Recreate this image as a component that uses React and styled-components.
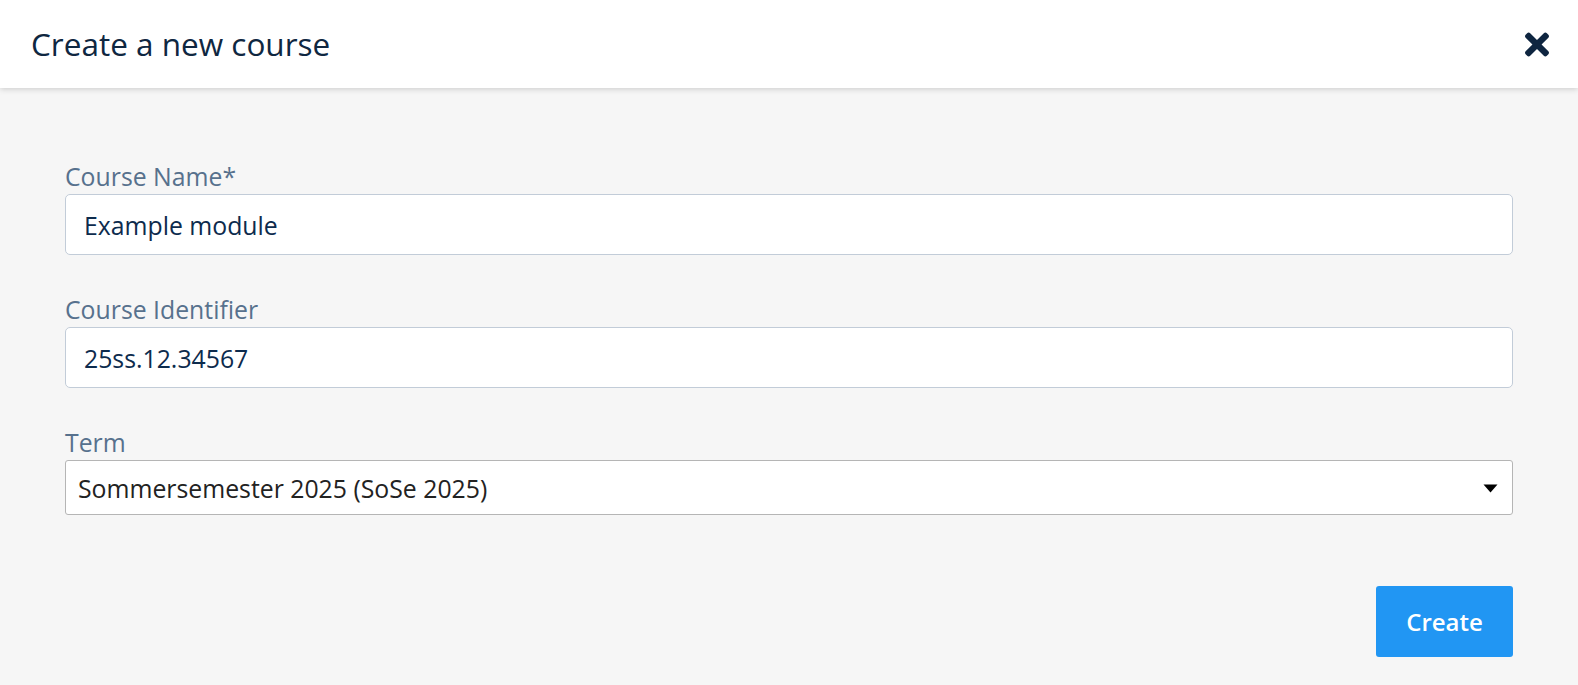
import React from "react";
import styled, { createGlobalStyle } from "styled-components";

const Global = createGlobalStyle`
  html, body { margin: 0; padding: 0; background: #f6f6f6; }
  body { font-family: "Open Sans", "Liberation Sans", sans-serif; }
  * { box-sizing: border-box; }
`;

const Page = styled.div`
  min-height: 685px;
  background: #f6f6f6;
  display: flex;
  flex-direction: column;
`;

const Header = styled.header`
  height: 88px;
  background: #ffffff;
  display: flex;
  align-items: center;
  justify-content: space-between;
  padding: 0 29px 0 31px;
  box-shadow: 0 1px 6px rgba(0, 0, 0, 0.18);
  position: relative;
  z-index: 1;
`;

const Title = styled.h1`
  margin: 0;
  font-size: 31.5px;
  font-weight: 400;
  color: #0f2741;
  line-height: 1.2;
`;

const CloseButton = styled.button`
  border: 0;
  background: none;
  padding: 0;
  display: flex;
  align-items: center;
  cursor: pointer;
  color: #0e2540;
`;

const Body = styled.main`
  padding: 71px 65px 0 65px;
  display: flex;
  flex-direction: column;
`;

const Field = styled.div`
  display: flex;
  flex-direction: column;
  margin-bottom: ${(p) => p.$mb}px;
`;

const Label = styled.label`
  font-size: 24.8px;
  line-height: 34px;
  color: #57718d;
  margin-bottom: 1px;
`;

const TextInput = styled.input`
  height: 61px;
  width: 100%;
  border: 1px solid #c2ccd8;
  border-radius: 5px;
  background: #ffffff;
  padding: 0 18px;
  font-family: "Open Sans", "Liberation Sans", sans-serif;
  font-size: 24.8px;
  color: #0d2b4d;
  outline: none;
`;

const SelectWrap = styled.div`
  position: relative;
  height: 55px;
`;

const Select = styled.select`
  appearance: none;
  -webkit-appearance: none;
  width: 100%;
  height: 55px;
  border: 1px solid #b5b5b5;
  border-radius: 3px;
  background: #ffffff;
  padding: 0 40px 0 12px;
  font-family: "Open Sans", "Liberation Sans", sans-serif;
  font-size: 24.8px;
  color: #222222;
  outline: none;
`;

const Caret = styled.svg`
  position: absolute;
  right: 15px;
  top: 24px;
  pointer-events: none;
`;

const Actions = styled.div`
  display: flex;
  justify-content: flex-end;
`;

const PrimaryButton = styled.button`
  width: 137px;
  height: 71px;
  border: 0;
  border-radius: 3px;
  background: #2196f3;
  color: #ffffff;
  font-family: "Open Sans", "Liberation Sans", sans-serif;
  font-size: 24px;
  font-weight: 600;
  cursor: pointer;
`;

export default function App() {
  return (
    <Page>
      <Global />
      <Header>
        <Title>Create a new course</Title>
        <CloseButton aria-label="Close">
          <svg width="24" height="35" viewBox="0 0 352 512" fill="currentColor">
            <path d="M242.72 256l100.07-100.07c12.28-12.28 12.28-32.19 0-44.48l-22.240-22.24c-12.28-12.28-32.19-12.28-44.48 0L176 189.28 75.93 89.21c-12.28-12.28-32.19-12.28-44.48 0L9.21 111.45c-12.28 12.28-12.28 32.19 0 44.48L109.28 256 9.21 356.07c-12.28 12.28-12.28 32.19 0 44.48l22.24 22.24c12.28 12.28 32.2 12.28 44.48 0L176 322.72l100.07 100.07c12.28 12.28 32.2 12.28 44.48 0l22.24-22.24c12.28-12.28 12.28-32.19 0-44.48L242.72 256z" />
          </svg>
        </CloseButton>
      </Header>
      <Body>
        <Field $mb={37}>
          <Label>Course Name*</Label>
          <TextInput defaultValue="Example module" />
        </Field>
        <Field $mb={37}>
          <Label>Course Identifier</Label>
          <TextInput defaultValue="25ss.12.34567" />
        </Field>
        <Field $mb={71}>
          <Label>Term</Label>
          <SelectWrap>
            <Select defaultValue="sose2025">
              <option value="sose2025">Sommersemester 2025 (SoSe 2025)</option>
            </Select>
            <Caret width="15" height="9" viewBox="0 0 15 9">
              <path d="M0.5 0.5 H14.5 L7.5 8.5 Z" fill="#000" />
            </Caret>
          </SelectWrap>
        </Field>
        <Actions>
          <PrimaryButton>Create</PrimaryButton>
        </Actions>
      </Body>
    </Page>
  );
}
